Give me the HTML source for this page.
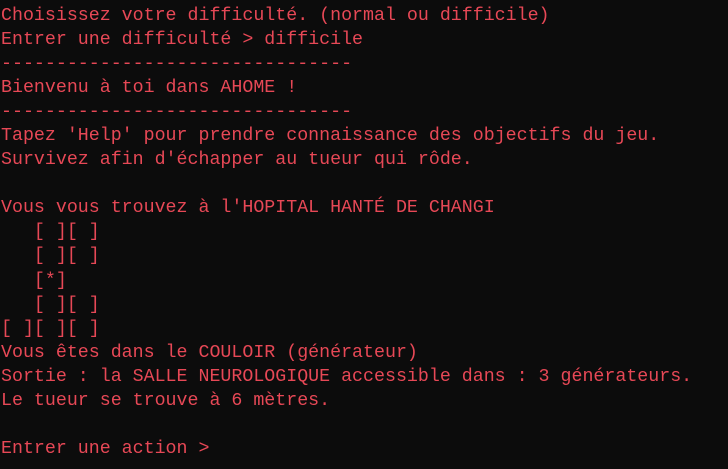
<!DOCTYPE html>
<html><head><meta charset="utf-8"><style>
html,body{margin:0;padding:0;background:#0c0c0c;width:728px;height:469px;overflow:hidden}
pre{margin:0;padding:4px 0 0 1px;font-family:"Liberation Mono",monospace;font-size:18.3px;line-height:24.05px;color:#e74856;white-space:pre}
</style></head><body><pre>Choisissez votre difficulté. (normal ou difficile)
Entrer une difficulté > difficile
--------------------------------
Bienvenu à toi dans AHOME !
--------------------------------
Tapez 'Help' pour prendre connaissance des objectifs du jeu.
Survivez afin d'échapper au tueur qui rôde.

Vous vous trouvez à l'HOPITAL HANTÉ DE CHANGI
   [ ][ ]
   [ ][ ]
   [*]
   [ ][ ]
[ ][ ][ ]
Vous êtes dans le COULOIR (générateur)
Sortie : la SALLE NEUROLOGIQUE accessible dans : 3 générateurs.
Le tueur se trouve à 6 mètres.

Entrer une action ></pre></body></html>
